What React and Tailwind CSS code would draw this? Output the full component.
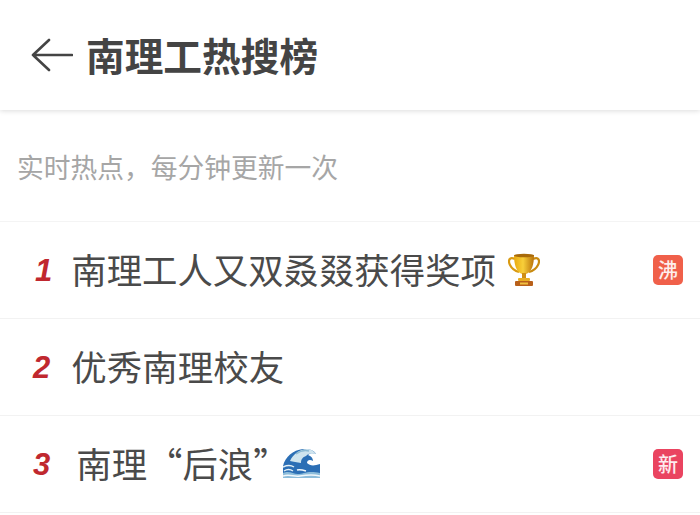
const cjk = "font-['Noto_Sans_CJK_SC','Noto_Sans',sans-serif]";

function Trophy() {
  return (
    <svg width="32" height="34" viewBox="0 0 32 34" className="ml-[12px] shrink-0">
      <defs>
        <linearGradient id="g" x1="0" x2="1" y1="0" y2="0">
          <stop offset="0" stopColor="#e9a90f" />
          <stop offset="0.45" stopColor="#f8cf3a" />
          <stop offset="1" stopColor="#b9720a" />
        </linearGradient>
      </defs>
      <path d="M7 6C1 3 0 8 2 12c1.500 3 5 6 9 7" fill="none" stroke="#d99a12" strokeWidth="2.200" />
      <path d="M25 6c6-3 7 2 5 6-1.500 3-5 6-9 7" fill="none" stroke="#c88a10" strokeWidth="2.200" />
      <path d="M6 2h20c0 9-2 17-8 19h-4C8 19 6 11 6 2z" fill="url(#g)" />
      <ellipse cx="16" cy="2.500" rx="10" ry="1.800" fill="#a86a0a" />
      <rect x="14" y="20" width="4" height="6" fill="#d08f12" />
      <rect x="10" y="25" width="12" height="3" rx="1" fill="#e8ae22" />
      <rect x="7" y="28" width="18" height="5" rx="1" fill="#b8601a" />
      <rect x="12" y="29.500" width="8" height="2" fill="#f0c040" />
    </svg>
  );
}

function Wave() {
  return (
    <svg width="37" height="31" viewBox="0 0 37 31" className="ml-[-6px] mt-[-2px] shrink-0">
      <path d="M0 30V18C2 9 10 2 20 1c6-.5 11 1 13 5-3-1-6-1-8 1 3 1 5 3 5 6-3-2-6-1-6 2 3 3 7 3 13 1v14z" fill="#2c6fb5" />
      <path d="M7 13C10 6 17 1 24 1c4 0 7 2 9 5-4-1-8-1-10 2-3 1-5 3-5 7-4-1-8-1-11-2z" fill="#cfe4ee" />
      <path d="M13 6c4-3 9-4 13-3" fill="none" stroke="#8ebbd3" strokeWidth="1.500" />
      <path d="M0 19c4-2 8-2 11 0M1 23c3-2 6-2 9 0" fill="none" stroke="#e5f1f6" strokeWidth="1.500" />
      <path d="M0 25c6-3 10 1 15 1s10-4 22-1v5H0z" fill="#8dbddb" />
      <path d="M0 28c7-2 11 1 17 0s12-2 20 0M14 22c3-1 6 0 9 1" fill="none" stroke="#f2f8fb" strokeWidth="1.500" />
    </svg>
  );
}

function Rank({ n }) {
  return (
    <span className="font-['Liberation_Sans',sans-serif] text-[31px] font-bold italic leading-none text-[#c0282f]">
      {n}
    </span>
  );
}

function Badge({ children, color }) {
  return (
    <span className={`ml-auto mr-[17px] flex h-[30px] w-[30px] items-center justify-center rounded-[5px] text-[20px] font-medium leading-none text-white/90 ${color}`}>
      {children}
    </span>
  );
}

export default function App() {
  return (
    <div className={`h-[515px] w-[700px] overflow-hidden bg-white ${cjk}`}>
      <header className="flex h-[110px] items-center bg-white pl-[31px] shadow-[0_1px_5px_rgba(0,0,0,0.14)]">
        <svg width="42" height="34" viewBox="0 0 42 34" fill="none" stroke="#444" strokeWidth="2.600" strokeLinecap="round" strokeLinejoin="round" className="shrink-0">
          <path d="M41 17H2M18 2 2 17l16 15" />
        </svg>
        <h1 className="ml-[13px] mt-[-2px] text-[38.700px] font-bold leading-none text-[#444444]">南理工热搜榜</h1>
      </header>
      <p className="h-[111px] pl-[17px] pt-[39px] text-[26.750px] leading-[36px] text-[#a6a6a6]">实时热点，每分钟更新一次</p>
      <ul className="border-t border-[#f4f4f4]">
        <li className="flex h-[97px] items-center border-b border-[#f2f2f2] pl-[35px]">
          <Rank n="1" />
          <span className="ml-[19px] mt-[-2px] text-[35.400px] leading-none text-[#4a4a4a]">南理工人又双叒叕获得奖项</span>
          <Trophy />
          <Badge color="bg-[#f0604a]">沸</Badge>
        </li>
        <li className="flex h-[97px] items-center border-b border-[#f2f2f2] pl-[33px]">
          <Rank n="2" />
          <span className="ml-[21px] mt-[-2px] text-[35.500px] leading-none text-[#4a4a4a]">优秀南理校友</span>
        </li>
        <li className="flex h-[97px] items-center border-b border-[#f2f2f2] pl-[33px]">
          <Rank n="3" />
          <span className="ml-[26px] mt-[-2px] text-[35.400px] leading-none text-[#4a4a4a]">南理“后浪”</span>
          <Wave />
          <Badge color="bg-[#ea4460]">新</Badge>
        </li>
      </ul>
    </div>
  );
}
